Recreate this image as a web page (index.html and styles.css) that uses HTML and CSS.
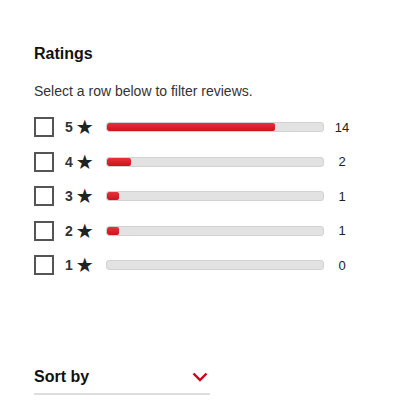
FILE: index.html
```html
<!DOCTYPE html>
<html lang="en">
<head>
<meta charset="UTF-8" />
<meta name="viewport" content="width=device-width, initial-scale=1" />
<title>Ratings</title>
<link rel="stylesheet" href="styles.css">
</head>
<body>

  <div class="ratings">
    <h2>Ratings</h2>
    <p class="hint">Select a row below to filter reviews.</p>

    <!-- Rating rows -->
    <ul class="rows">
      <li class="row">
        <span class="box"></span>
        <span class="stars">5 <span class="star">&#9733;</span></span>
        <span class="bar"><span class="fill" style="width: 77.8%"></span></span>
        <span class="count">14</span>
      </li>
      <li class="row">
        <span class="box"></span>
        <span class="stars">4 <span class="star">&#9733;</span></span>
        <span class="bar"><span class="fill" style="width: 11.1%"></span></span>
        <span class="count">2</span>
      </li>
      <li class="row">
        <span class="box"></span>
        <span class="stars">3 <span class="star">&#9733;</span></span>
        <span class="bar"><span class="fill" style="width: 5.6%"></span></span>
        <span class="count">1</span>
      </li>
      <li class="row">
        <span class="box"></span>
        <span class="stars">2 <span class="star">&#9733;</span></span>
        <span class="bar"><span class="fill" style="width: 5.6%"></span></span>
        <span class="count">1</span>
      </li>
      <li class="row">
        <span class="box"></span>
        <span class="stars">1 <span class="star">&#9733;</span></span>
        <span class="bar"><span class="fill" style="width: 0%"></span></span>
        <span class="count">0</span>
      </li>
    </ul>

    <!-- Sort -->
    <div class="sort">
      <span>Sort by</span>
      <svg width="16" height="10" viewBox="0 0 16 10"><path d="M1.5 1.5 L8 8 L14.5 1.5" fill="none" stroke="#d0021b" stroke-width="2.4"/></svg>
    </div>
  </div>

</body>
</html>
```

FILE: styles.css
```css
* {
  margin: 0; padding: 0; box-sizing: border-box;
}
body {
  background: #fff;
  font-family: "Liberation Sans", Arial, sans-serif;
  color: #222;
}
.ratings {
  padding: 44px 0 0 34px;
  width: 360px;
}
h2 {
  font-size: 16px;
  font-weight: bold;
  color: #111;
  line-height: 20px;
}
.hint {
  margin-top: 19px;
  font-size: 14px;
  color: #333;
  line-height: 16px;
}

/* Rows */
.rows {
  list-style: none;
  margin-top: 11px;
}
.row {
  display: flex;
  align-items: center;
  height: 34.5px;
}
.box {
  flex: none;
  width: 20px;
  height: 20px;
  border: 2px solid #555;
}
.stars {
  flex: none;
  margin-left: 11px;
  width: 30px;
  font-size: 14px;
  font-weight: bold;
  color: #333;
  display: flex;
  align-items: center;
  gap: 3px;
}
.star {
  font-size: 20px;
  color: #222;
  font-family: "DejaVu Sans", sans-serif;
  line-height: 1;
}
.bar {
  flex: none;
  margin-left: 11px;
  width: 218px;
  height: 10px;
  background: #e2e2e2;
  border: 1px solid #d2d2d2;
  border-radius: 3px;
  overflow: hidden;
}
.fill {
  display: block;
  height: 100%;
  background: linear-gradient(to bottom, #e5323b, #d0121c);
  border-radius: 2px;
}
.count {
  width: 40px;
  text-align: center;
  font-size: 13px;
  color: #222;
}

/* Sort */
.sort {
  margin-top: 85px;
  width: 176px;
  display: flex;
  justify-content: space-between;
  align-items: center;
  padding-bottom: 7px;
  border-bottom: 2px solid #ddd;
  font-size: 16px;
  line-height: 18px;
  font-weight: bold;
  color: #111;
}
.sort svg {
  margin-right: 2px;
}
```
